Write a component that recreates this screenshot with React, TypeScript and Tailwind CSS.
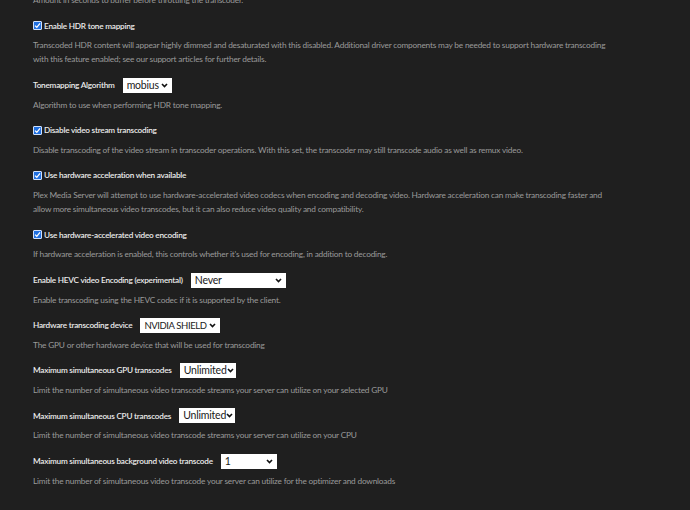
import React from "react";

const FONT = { fontFamily: "Lato, 'Open Sans', sans-serif" };

function Chevron() {
  return (
    <svg width="7" height="5" viewBox="0 0 7 5" className="shrink-0">
      <polyline points="1,1 3.5,3.6 6,1" fill="none" stroke="#111" strokeWidth="1.6" />
    </svg>
  );
}

function Select({ value, w, t }: { value: string; w: string; t: string }) {
  return (
    <div className={`${w} h-[15px] bg-white flex items-center justify-between pl-[4px] pr-[4px] leading-[15px] text-[#1a1a1a] font-normal`}>
      <span className={`whitespace-nowrap ${t}`}>{value}</span>
      <Chevron />
    </div>
  );
}

function Check() {
  return (
    <div className="w-[9px] h-[9px] rounded-[1px] bg-[#1f6fe0] border border-[#cfe0fb] flex items-center justify-center shrink-0">
      <svg width="7" height="7" viewBox="0 0 7 7">
        <polyline points="1,3.6 2.8,5.3 6,1.4" fill="none" stroke="#fff" strokeWidth="1.3" />
      </svg>
    </div>
  );
}

const DESC = "text-[#9a9a9a] text-[8.3px] tracking-[-0.2px] leading-[14px]";
const LABEL = "h-[16px] flex items-center text-[#ececec] text-[8.2px] tracking-[-0.22px] font-semibold";

function Desc({ lines }: { lines: string[] }) {
  return (
    <div className={`mt-[4.5px] ${DESC}`}>
      {lines.map((l, i) => (
        <div key={i} className="whitespace-nowrap">{l}</div>
      ))}
    </div>
  );
}

function CheckItem({ label, desc }: { label: string; desc: string[] }) {
  return (
    <div>
      <div className={`${LABEL} gap-[2px]`}>
        <Check />
        <span className="whitespace-nowrap">{label}</span>
      </div>
      <Desc lines={desc} />
    </div>
  );
}

function SelectItem({
  label,
  value,
  w,
  t = "text-[10.5px] tracking-[-0.2px]",
  desc,
}: {
  label: string;
  value: string;
  w: string;
  t?: string;
  desc: string[];
}) {
  return (
    <div>
      <div className={`${LABEL} gap-[8px]`}>
        <span className="whitespace-nowrap">{label}</span>
        <Select value={value} w={w} t={t} />
      </div>
      <Desc lines={desc} />
    </div>
  );
}

export default function App() {
  return (
    <div className="w-[690px] h-[510px] overflow-hidden bg-[#1f1f1f]" style={FONT}>
      <div className="pl-[33px] mt-[-7px] flex flex-col gap-[10.75px]">
        <div className={`${DESC} whitespace-nowrap`}>
          Amount in seconds to buffer before throttling the transcoder.
        </div>
        <CheckItem
          label="Enable HDR tone mapping"
          desc={[
            "Transcoded HDR content will appear highly dimmed and desaturated with this disabled. Additional driver components may be needed to support hardware transcoding",
            "with this feature enabled; see our support articles for further details.",
          ]}
        />
        <SelectItem
          label="Tonemapping Algorithm"
          value="mobius"
          w="w-[49px]"
          desc={["Algorithm to use when performing HDR tone mapping."]}
        />
        <CheckItem
          label="Disable video stream transcoding"
          desc={["Disable transcoding of the video stream in transcoder operations. With this set, the transcoder may still transcode audio as well as remux video."]}
        />
        <CheckItem
          label="Use hardware acceleration when available"
          desc={[
            "Plex Media Server will attempt to use hardware-accelerated video codecs when encoding and decoding video. Hardware acceleration can make transcoding faster and",
            "allow more simultaneous video transcodes, but it can also reduce video quality and compatibility.",
          ]}
        />
        <CheckItem
          label="Use hardware-accelerated video encoding"
          desc={["If hardware acceleration is enabled, this controls whether it's used for encoding, in addition to decoding."]}
        />
        <SelectItem
          label="Enable HEVC video Encoding (experimental)"
          value="Never"
          w="w-[95px]"
          desc={["Enable transcoding using the HEVC codec if it is supported by the client."]}
        />
        <SelectItem
          label="Hardware transcoding device"
          value="NVIDIA SHIELD"
          w="w-[80px]"
          t="text-[9.5px] tracking-[-0.4px]"
          desc={["The GPU or other hardware device that will be used for transcoding"]}
        />
        <SelectItem
          label="Maximum simultaneous GPU transcodes"
          value="Unlimited"
          w="w-[56px]"
          desc={["Limit the number of simultaneous video transcode streams your server can utilize on your selected GPU"]}
        />
        <SelectItem
          label="Maximum simultaneous CPU transcodes"
          value="Unlimited"
          w="w-[56px]"
          desc={["Limit the number of simultaneous video transcode streams your server can utilize on your CPU"]}
        />
        <SelectItem
          label="Maximum simultaneous background video transcode"
          value="1"
          w="w-[56px]"
          desc={["Limit the number of simultaneous video transcode your server can utilize for the optimizer and downloads"]}
        />
      </div>
    </div>
  );
}
